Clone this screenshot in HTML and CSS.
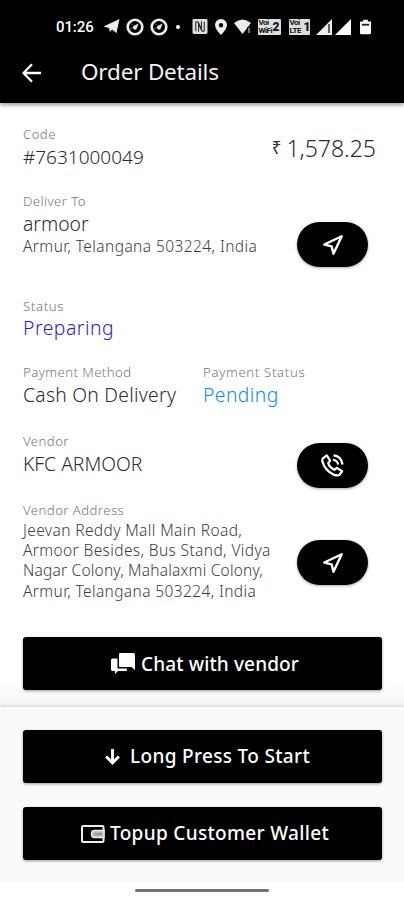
FILE: index.html
```html
<!DOCTYPE html>
<html lang="en">
<head>
<meta charset="utf-8">
<meta name="viewport" content="width=device-width, initial-scale=1">
<title>Order Details</title>
<link rel="stylesheet" href="styles.css">
</head>
<body>
<svg width="0" height="0" class="defs" aria-hidden="true">
  <symbol id="nav" viewBox="0 0 24 24"><path d="M21.500 2.500 12.500 21.500 10.500 13.500 2.500 11.500Z" fill="none" stroke="#fff" stroke-width="2.600" stroke-linejoin="round"/></symbol>
  <symbol id="dial" viewBox="0 0 18 18"><circle cx="9" cy="9" r="7.300" fill="none" stroke="#eee" stroke-width="2.600"/><path d="M12.500 5.500 10.800 10.500a2.100 2.100 0 1 1-3-2.800Z" fill="#ddd"/><path d="M5 5.500 6 6.500M4.500 11 5.500 10.500" stroke="#aaa"/></symbol>
</svg>
<header class="top">
  <div class="statusbar">
    <span class="time">01:26</span>
    <svg class="s-plane" viewBox="0 0 16 15"><path d="M0 7.500 16 0 13 14 8.500 10.500 6.500 13 5.500 9Z" fill="#eee"/></svg>
    <svg class="s-dial"><use href="#dial"/></svg>
    <svg class="s-dial second"><use href="#dial"/></svg>
    <span class="dot"></span>
    <svg class="s-nfc" viewBox="0 0 16 16"><rect width="16" height="16" rx="1.500" fill="#ddd"/><path d="M3.500 13V3H6l4 9M6.500 13.500V6M12.500 3v10H10L6 4M9.500 2.500V10" fill="none" stroke="#111" stroke-width="1"/></svg>
    <svg class="s-pin" viewBox="0 0 12 16"><path fill-rule="evenodd" d="M6 0a6 6 0 0 1 6 6c0 4-6 10-6 10S0 10 0 6a6 6 0 0 1 6-6Zm0 4a2.200 2.200 0 1 0 0 4.400A2.200 2.200 0 0 0 6 4Z" fill="#eee"/></svg>
    <svg class="s-wifi" viewBox="0 0 17 16"><path d="M0 4Q8.500-3 17 4L8.500 15Z" fill="#eee"/><path d="M14.500 8v7" stroke="#000" stroke-width="3"/><path d="M15 9v5" stroke="#999" stroke-width="1.500"/></svg>
    <span class="sim"><span>Voi</span><span>WiFi</span><b>2</b></span>
    <span class="sim one"><span>Voi</span><span>LTE</span><b>1</b></span>
    <svg class="s-signal" viewBox="0 0 16 16"><path d="M0 16 16 0V16Z" fill="#eee"/><path d="M13 5v9" stroke="#333" stroke-width="1.500"/></svg>
    <svg class="s-signal last" viewBox="0 0 16 16"><path d="M0 16 16 0V16Z" fill="#fff"/></svg>
    <svg class="s-battery" viewBox="0 0 12 16"><path d="M3.500 0h5v2H12v12.500q0 1.500-1.500 1.500h-9Q0 16 0 14.500V2h3.500Z" fill="#fff"/><path d="M2 5.500h8" stroke="#222" stroke-width="2"/></svg>
  </div>
  <div class="appbar">
    <svg class="back" viewBox="0 0 20 20"><path d="M19 10H2M10 1.300 1.500 10l8.500 8.700" fill="none" stroke="#fff" stroke-width="2.300"/></svg>
    <h1>Order Details</h1>
  </div>
</header>
<main>
  <section class="order">
    <div><div class="label">Code</div><div class="value number">#7631000049</div></div>
    <div class="price"><span class="rupee">₹</span><span>1,578.25</span></div>
  </section>
  <section class="deliver">
    <div><div class="label">Deliver To</div><div class="value name">armoor</div><div class="address">Armur, Telangana 503224, India</div></div>
    <button class="pill" aria-label="Navigate"><svg class="nav"><use href="#nav"/></svg></button>
  </section>
  <section class="status">
    <div><div class="label wide">Status</div><div class="value preparing">Preparing</div></div>
  </section>
  <section class="payment">
    <div><div class="label">Payment Method</div><div class="value cash">Cash On Delivery</div></div>
    <div><div class="label wide">Payment Status</div><div class="value pending">Pending</div></div>
  </section>
  <section class="vendor">
    <div><div class="label">Vendor</div><div class="value name">KFC ARMOOR</div></div>
    <button class="pill" aria-label="Call"><svg class="phone" viewBox="0 0 24 24" fill="none" stroke="#fff" stroke-width="2.300" stroke-linejoin="round"><path d="M2 4.500 6 1.500 9.500 7 7.500 9.500Q9 14 14 16.500L16.500 14.500 22 18 19 22Q17 23 13 21.500 4 17 1.500 8 1 6 2 4.500Z"/><path d="M13 1.500Q21 2 22.500 11M12.500 6Q17 6.500 18 11"/></svg></button>
  </section>
  <section class="vaddress">
    <div><div class="label">Vendor Address</div><div class="address lines"><span>Jeevan Reddy Mall Main Road,</span><span>Armoor Besides, Bus Stand, Vidya</span><span class="tight">Nagar Colony, Mahalaxmi Colony,</span><span>Armur, Telangana 503224, India</span></div></div>
    <button class="pill" aria-label="Navigate to vendor"><svg class="nav"><use href="#nav"/></svg></button>
  </section>
  <button class="action chat"><svg viewBox="0 0 24 21"><path d="M9 0H22.500Q24 0 24 1.500V17l-3.500-3H9Q8 14 8 13V1Q8 0 9 0Z" fill="#fff"/><path d="M1.500 5.500H6.500V15.500H16V17Q16 18 15 18H7L4 21V18H1.500Q0 18 0 16.500V7Q0 5.500 1.500 5.500Z" fill="#fff"/></svg><span>Chat with vendor</span></button>
</main>
<footer>
  <button class="action long"><svg viewBox="0 0 14 15"><path d="M7 0V13M1 7l6 6 6-6" fill="none" stroke="#fff" stroke-width="2.700"/></svg><span>Long Press To Start</span></button>
  <button class="action topup"><svg viewBox="0 0 24 18"><rect x="1" y="1" width="21.500" height="16" rx="1" fill="none" stroke="#eee" stroke-width="2"/><path d="M23 5.500H13.500Q10.500 5.500 10.500 9t3 3.500H23Z" fill="#bbb" stroke="#eee" stroke-width="1.500"/><path d="M14 9h7" stroke="#777"/></svg><span>Topup Customer Wallet</span></button>
</footer>
<div class="gesture"><span></span></div>
</body>
</html>
```
FILE: styles.css
```css
* { box-sizing: border-box; }
body { margin: 0; width: 404px; height: 900px; overflow: hidden; display: flex; flex-direction: column; background: #fff; color: #333; font-family: "Noto Sans", sans-serif; font-weight: 300; }
.defs { display: none; }
button { border: 0; padding: 0; font: inherit; color: #fff; background: #000; }
svg { display: block; flex: none; }
.top { height: 103px; flex: none; background: #000; box-shadow: 0 2px 4px rgba(0,0,0,.4); z-index: 1; color: #fff; }
.statusbar { height: 42px; padding: 11px 0 0 56px; display: flex; align-items: center; }
.time { width: 46.500px; font: 500 15px/20px Roboto, sans-serif; letter-spacing: -.1px; white-space: nowrap; }
.s-plane { width: 17px; height: 15px; margin-right: 6px; }
.s-dial { width: 18px; height: 18px; }
.second { margin-left: 6px; }
.dot { width: 4px; height: 4px; border-radius: 2px; background: #fff; margin: 0 12px 0 8px; }
.s-nfc { width: 16px; height: 15px; margin-right: 7px; }
.s-pin { width: 12px; height: 16px; margin-right: 7px; }
.s-wifi { width: 17px; height: 16px; margin-right: 7px; }
.sim { width: 23px; height: 16px; background: #ddd; color: #111; border-radius: 1px; display: grid; grid-template: 8px 8px / 14px 8px; font: 700 8px/8px Roboto, sans-serif; overflow: hidden; letter-spacing: -.5px; padding-left: 1px; }
.sim span { grid-column: 1; }
.sim b { grid-column: 2; grid-row: 1 / 3; font-size: 12px; line-height: 16px; }
.one { margin-left: 8px; width: 21px; }
.s-signal { width: 16px; height: 16px; margin-left: 6px; }
.last { margin-left: 3px; }
.s-battery { width: 11px; height: 16px; margin-left: 9px; }
.appbar { height: 61px; padding: 0 22px; display: flex; align-items: center; }
.back { width: 20px; height: 20px; }
h1 { margin: 0 0 1px 39px; font-size: 22.500px; line-height: 30px; font-weight: 400; letter-spacing: -.2px; color: #f3f3f3; white-space: nowrap; }
main { height: 604px; flex: none; padding: 22px 22px 0 23px; background: linear-gradient(#fff 580px, #f3f3f3); }
section { display: flex; justify-content: space-between; align-items: flex-start; white-space: nowrap; }
.label { font-size: 13.200px; line-height: 18px; color: #777; letter-spacing: .42px; }
.wide { letter-spacing: .65px; }
.value { font-size: 19.300px; line-height: 28px; color: #2c2c2c; letter-spacing: .2px; }
.number { font-size: 19px; letter-spacing: 0; }
.name { letter-spacing: 0; }
.cash { letter-spacing: .27px; }
.address { font-size: 15.500px; line-height: 20.200px; margin-top: -2px; color: #3c3c3c; letter-spacing: .42px; }
.lines { margin-top: 1px; letter-spacing: .38px; }
.lines span { display: block; }
.lines .tight { letter-spacing: .2px; }
.order { height: 67px; }
.deliver { height: 105px; }
.status { height: 66px; }
.payment { height: 69px; display: grid; grid-template-columns: 180px 1fr; }
.vendor { height: 69px; }
.vaddress { height: 136px; }
.price { display: flex; align-items: center; gap: 5px; margin-right: 6px; font-size: 23px; line-height: 46px; color: #2c2c2c; }
.rupee { font-size: 17px; font-weight: 400; }
.preparing { color: #2b18d8; letter-spacing: .55px; line-height: 26px; }
.pending { color: #0c8cef; letter-spacing: .45px; }
.pill { width: 71px; height: 45px; flex: none; border-radius: 22.500px; display: flex; align-items: center; justify-content: center; margin: 30px 14px 0 0; box-shadow: 0 1px 3px rgba(0,0,0,.35); }
.vendor .pill { margin-top: 11px; }
.vaddress .pill { margin-top: 39px; }
.nav { width: 22px; height: 22px; }
.phone { width: 23px; height: 23px; }
.action { width: 359px; height: 53px; border-radius: 3px; display: flex; align-items: center; justify-content: center; padding-left: 5px; font-size: 19px; line-height: 28px; font-weight: 500; white-space: nowrap; box-shadow: 0 1px 3px rgba(0,0,0,.4); }
.action span { margin-bottom: 2px; }
.chat svg { width: 24px; height: 21px; margin-right: 6px; }
.chat span { letter-spacing: .13px; margin-bottom: 0; }
.long { padding-left: 10px; }
.long svg { width: 15px; height: 16px; margin-right: 10px; }
.long span, .topup span { letter-spacing: .33px; }
.topup svg { width: 24px; height: 18px; margin-right: 5px; }
footer { height: 174px; flex: none; padding: 23px 22px 0 23px; background: #fafafa; box-shadow: 0 -1px 3px rgba(0,0,0,.12); }
footer .action + .action { margin-top: 24px; }
.gesture { height: 19px; padding-top: 8px; display: flex; justify-content: center; }
.gesture span { width: 134px; height: 3px; border-radius: 2px; background: #737373; }
```
